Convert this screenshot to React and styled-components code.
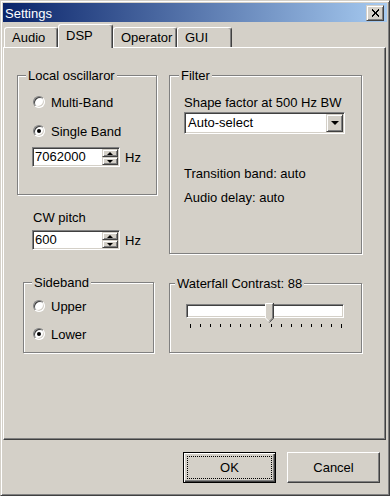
import React from "react";
import styled, { createGlobalStyle, css } from "styled-components";

const GlobalStyle = createGlobalStyle`
  body {
    margin: 0;
    background: #d4d0c8;
  }
  * {
    box-sizing: border-box;
  }
`;

function Radio({ label, checked, top }) {
  return (
    <RadioRow $top={top}>
      <RadioMark $checked={checked} />
      <span>{label}</span>
    </RadioRow>
  );
}

function Spin({ value }) {
  return (
    <SpinRow>
      <SpinBox>
        <SpinValue>{value}</SpinValue>
        <SpinButtons>
          <SpinButton>
            <Arrow $up />
          </SpinButton>
          <SpinButton>
            <Arrow />
          </SpinButton>
        </SpinButtons>
      </SpinBox>
      <Unit>Hz</Unit>
    </SpinRow>
  );
}

function App() {
  const ticks = Array.from({ length: 16 });
  return (
    <>
      <GlobalStyle />
      <Window>
        <TitleBar>
          <Title>Settings</Title>
          <CloseButton>
            <svg width="9" height="8" viewBox="0 0 9 8" shapeRendering="crispEdges">
              <path d="M1 0.5 L8 7.5 M8 0.5 L1 7.5" stroke="#000" strokeWidth="2" />
            </svg>
          </CloseButton>
        </TitleBar>

        <TabStrip>
          <Tab $w={54}>Audio</Tab>
          <Tab $w={55} $active>
            DSP
          </Tab>
          <Tab $w={64}>Operator</Tab>
          <Tab $w={55}>GUI</Tab>
        </TabStrip>

        <Panel>
          <Columns>
            <Column>
              <Group $w={140} $h={127}>
                <Caption $indent={8}>Local oscillaror</Caption>
                <GroupBody $top={11} $left={14}>
                  <Radio label="Multi-Band" />
                  <Radio label="Single Band" checked top={13} />
                  <Spaced $top={8}>
                    <Spin value="7062000" />
                  </Spaced>
                </GroupBody>
              </Group>

              <Label $top={15} $left={16}>
                CW pitch
              </Label>
              <Spaced $top={5} $left={15}>
                <Spin value="600" />
              </Spaced>

              <Group $w={131} $h={78} $top={25} $left={6}>
                <Caption $indent={8}>Sideband</Caption>
                <GroupBody $top={8} $left={8}>
                  <Radio label="Upper" />
                  <Radio label="Lower" checked top={12} />
                </GroupBody>
              </Group>
            </Column>

            <Column>
              <Group $w={193} $h={186}>
                <Caption $indent={9}>Filter</Caption>
                <GroupBody $top={12} $left={14}>
                  <Label>Shape factor at 500 Hz BW</Label>
                  <Combo>
                    <ComboValue>Auto-select</ComboValue>
                    <DropButton>
                      <DropArrow />
                    </DropButton>
                  </Combo>
                  <Label $top={32}>Transition band: auto</Label>
                  <Label $top={9}>Audio delay: auto</Label>
                </GroupBody>
              </Group>

              <Group $w={193} $h={77} $top={22}>
                <Caption $indent={5}>Waterfall Contrast: 88</Caption>
                <GroupBody $top={13} $left={16}>
                  <Track>
                    <Thumb width="9" height="20" viewBox="0 0 9 20">
                      <path d="M0 0 H8 V15 L4 19 L0 15 Z" fill="#d4d0c8" />
                      <path d="M0.5 15 V0.5 H7.5" stroke="#fff" fill="none" />
                      <path d="M7.5 1 V15 L4 18.5" stroke="#808080" fill="none" />
                      <path d="M8.5 0 V15.2 L4.3 19.5" stroke="#404040" fill="none" />
                      <path d="M0.5 15 L4 18.5" stroke="#fff" fill="none" />
                    </Thumb>
                  </Track>
                  <Ticks>
                    {ticks.map((_, i) => (
                      <Tick key={i} $long={i === 0 || i === ticks.length - 1} />
                    ))}
                  </Ticks>
                </GroupBody>
              </Group>
            </Column>
          </Columns>
        </Panel>

        <ButtonRow>
          <Button $default>OK</Button>
          <Button>Cancel</Button>
        </ButtonRow>
      </Window>
    </>
  );
}

export default App;

const font = css`
  font-family: "Liberation Sans", Arial, sans-serif;
  font-size: 13px;
  line-height: 15px;
  color: #000;
`;

const raised = css`
  background: #d4d0c8;
  border: 1px solid;
  border-color: #d4d0c8 #404040 #404040 #d4d0c8;
  box-shadow: inset 1px 1px #fff, inset -1px -1px #808080;
`;

const sunken = css`
  background: #fff;
  border: 1px solid;
  border-color: #808080 #fff #fff #808080;
  box-shadow: inset 1px 1px #404040, inset -1px -1px #d4d0c8;
`;

const Window = styled.div`
  ${font};
  width: 390px;
  height: 496px;
  padding: 2px;
  display: flex;
  flex-direction: column;
  background: #d4d0c8;
  border: 1px solid;
  border-color: #d4d0c8 #404040 #404040 #d4d0c8;
  box-shadow: inset 1px 1px #fff, inset -1px -1px #808080;
`;

const TitleBar = styled.div`
  height: 19px;
  flex: none;
  display: flex;
  align-items: center;
  justify-content: space-between;
  padding: 0 3px 0 2px;
  background: linear-gradient(to right, #0a246a, #a6caf0);
`;

const Title = styled.div`
  color: #fff;
  padding-top: 2px;
`;

const CloseButton = styled.div`
  ${raised};
  width: 18px;
  height: 16px;
  display: flex;
  align-items: center;
  justify-content: center;
`;

const TabStrip = styled.div`
  flex: none;
  height: 23px;
  margin-top: 2px;
  padding-left: 1px;
  display: flex;
  align-items: flex-end;
`;

const Tab = styled.div`
  position: relative;
  z-index: ${(p) => (p.$active ? 1 : 0)};
  width: ${(p) => p.$w}px;
  height: ${(p) => (p.$active ? 24 : 20)}px;
  margin-bottom: ${(p) => (p.$active ? -1 : 0)}px;
  padding: 0 0 ${(p) => (p.$active ? 2 : 0)}px 7px;
  display: flex;
  align-items: center;
  background: #d4d0c8;
  border: 1px solid;
  border-bottom: none;
  border-color: #fff #404040 transparent #fff;
  border-radius: 3px 3px 0 0;
  box-shadow: inset -1px 0 #808080;
`;

const Panel = styled.div`
  flex: none;
  height: 393px;
  margin-right: 1px;
  border: 1px solid;
  border-color: #fff #404040 #404040 #fff;
  box-shadow: inset -1px -1px #808080;
`;

const Columns = styled.div`
  display: grid;
  grid-template-columns: 140px 193px;
  column-gap: 12px;
  padding: 20px 0 0 13px;
`;

const Column = styled.div`
  display: flex;
  flex-direction: column;
  align-items: flex-start;
`;

const Group = styled.fieldset`
  margin: ${(p) => p.$top || 0}px 0 0 ${(p) => p.$left || 0}px;
  padding: 0;
  min-width: 0;
  width: ${(p) => p.$w}px;
  height: ${(p) => p.$h}px;
  border: 1px solid #808080;
  box-shadow: inset 1px 1px #fff, 1px 1px #fff;
`;

const Caption = styled.legend`
  margin-left: ${(p) => p.$indent}px;
  padding: 0 2px;
  background: #d4d0c8;
`;

const GroupBody = styled.div`
  display: flex;
  flex-direction: column;
  align-items: flex-start;
  padding: ${(p) => p.$top}px 0 0 ${(p) => p.$left}px;
`;

const Spaced = styled.div`
  margin: ${(p) => p.$top || 0}px 0 0 ${(p) => p.$left || 0}px;
`;

const Label = styled.div`
  margin: ${(p) => p.$top || 0}px 0 0 ${(p) => p.$left || 0}px;
  white-space: nowrap;
`;

const RadioRow = styled.div`
  height: 16px;
  display: flex;
  align-items: center;
  gap: 6px;
  margin: ${(p) => p.$top || 0}px 0 0 1px;
`;

const RadioMark = styled.span`
  position: relative;
  width: 12px;
  height: 12px;
  border-radius: 50%;
  background: #fff;
  border: 1px solid;
  border-color: #808080 #fff #fff #808080;
  box-shadow: inset 1px 1px #404040, inset -1px -1px #d4d0c8;
  &::after {
    content: "";
    display: ${(p) => (p.$checked ? "block" : "none")};
    position: absolute;
    left: 3px;
    top: 3px;
    width: 4px;
    height: 4px;
    border-radius: 50%;
    background: #000;
  }
`;

const SpinRow = styled.div`
  display: flex;
  align-items: center;
  gap: 5px;
`;

const SpinBox = styled.div`
  ${sunken};
  width: 88px;
  height: 20px;
  padding: 1px;
  display: flex;
`;

const SpinValue = styled.div`
  flex: 1;
  padding-left: 1px;
  line-height: 16px;
`;

const SpinButtons = styled.div`
  width: 16px;
  display: flex;
  flex-direction: column;
`;

const SpinButton = styled.div`
  ${raised};
  height: 8px;
  display: flex;
  align-items: center;
  justify-content: center;
`;

const Arrow = styled.span`
  width: 0;
  height: 0;
  border-left: 3px solid transparent;
  border-right: 3px solid transparent;
  ${(p) =>
    p.$up
      ? css`
          border-bottom: 3px solid #000;
        `
      : css`
          border-top: 3px solid #000;
        `}
`;

const Unit = styled.span``;

const Combo = styled.div`
  ${sunken};
  margin-top: 2px;
  width: 161px;
  height: 22px;
  padding: 1px;
  display: flex;
`;

const ComboValue = styled.div`
  flex: 1;
  padding-left: 2px;
  line-height: 18px;
`;

const DropButton = styled.div`
  ${raised};
  width: 17px;
  height: 18px;
  display: flex;
  align-items: center;
  justify-content: center;
`;

const DropArrow = styled.span`
  width: 0;
  height: 0;
  border-left: 4px solid transparent;
  border-right: 4px solid transparent;
  border-top: 4px solid #000;
`;

const Track = styled.div`
  ${sunken};
  position: relative;
  width: 158px;
  height: 14px;
`;

const Thumb = styled.svg`
  position: absolute;
  top: -2px;
  left: 78px;
`;

const Ticks = styled.div`
  width: 152px;
  height: 4px;
  margin: 6px 0 0 4px;
  display: flex;
  justify-content: space-between;
  align-items: flex-start;
`;

const Tick = styled.span`
  width: 1px;
  height: ${(p) => (p.$long ? 4 : 3)}px;
  background: #000;
`;

const ButtonRow = styled.div`
  display: flex;
  justify-content: flex-end;
  gap: 11px;
  padding: 12px 7px 0 0;
`;

const Button = styled.button`
  ${font};
  width: 93px;
  height: 31px;
  padding: 0;
  background: #d4d0c8;
  border: 1px solid;
  border-color: #fff #404040 #404040 #fff;
  box-shadow: inset -1px -1px #808080;
  ${(p) =>
    p.$default &&
    css`
      border-color: #000;
      box-shadow: inset 1px 1px #fff, inset -1px -1px #404040, inset -2px -2px #808080;
      outline: 1px dotted #000;
      outline-offset: -5px;
    `}
`;
